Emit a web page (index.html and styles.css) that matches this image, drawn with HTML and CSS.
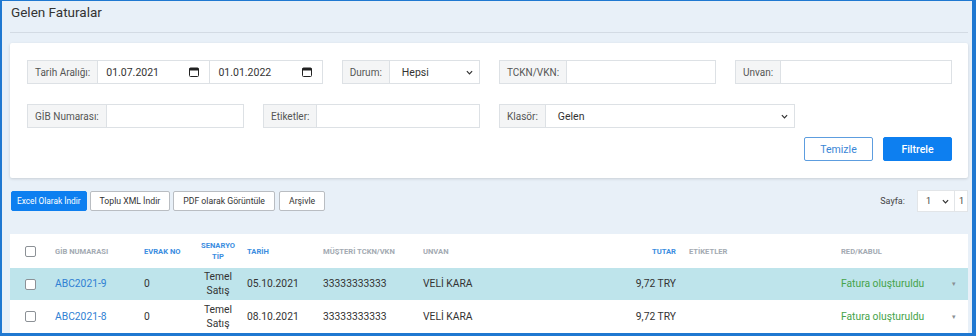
FILE: index.html
```html
<!DOCTYPE html>
<html lang="tr">
<head>
    <meta charset="UTF-8">
    <title>Gelen Faturalar</title>
    <link rel="stylesheet" href="styles.css">
</head>
<body>
<div class="frame">
    <h1 class="page-title">Gelen Faturalar</h1>

    <!-- Filtre kartı -->
    <div class="filter-card">
        <div class="filter-grid">
            <div class="group span-4">
                <span class="group-label">Tarih Aralığı:</span>
                <div class="field date">
                    <span>01.07.2021</span>
                    <svg class="cal" viewBox="0 0 10 10" width="10" height="10"><rect x="0.5" y="1" width="9" height="8.5" rx="1" fill="none" stroke="#222" stroke-width="1"/><rect x="0.5" y="1" width="9" height="2.5" fill="#222"/></svg>
                </div>
                <div class="field date">
                    <span>01.01.2022</span>
                    <svg class="cal" viewBox="0 0 10 10" width="10" height="10"><rect x="0.5" y="1" width="9" height="8.5" rx="1" fill="none" stroke="#222" stroke-width="1"/><rect x="0.5" y="1" width="9" height="2.5" fill="#222"/></svg>
                </div>
            </div>
            <div class="group span-2">
                <span class="group-label">Durum:</span>
                <div class="field select">
                    <span>Hepsi</span>
                    <svg class="chev" viewBox="0 0 8 5" width="7" height="5"><path d="M1 1l3 3 3-3" fill="none" stroke="#333" stroke-width="1.4"/></svg>
                </div>
            </div>
            <div class="group span-3">
                <span class="group-label">TCKN/VKN:</span>
                <div class="field"></div>
            </div>
            <div class="group span-3">
                <span class="group-label">Unvan:</span>
                <div class="field"></div>
            </div>

            <div class="group span-3">
                <span class="group-label">GİB Numarası:</span>
                <div class="field"></div>
            </div>
            <div class="group span-3">
                <span class="group-label">Etiketler:</span>
                <div class="field"></div>
            </div>
            <div class="group span-4">
                <span class="group-label">Klasör:</span>
                <div class="field select">
                    <span>Gelen</span>
                    <svg class="chev" viewBox="0 0 8 5" width="7" height="5"><path d="M1 1l3 3 3-3" fill="none" stroke="#333" stroke-width="1.4"/></svg>
                </div>
            </div>
        </div>
        <div class="filter-actions">
            <button class="btn btn-outline">Temizle</button>
            <button class="btn btn-primary">Filtrele</button>
        </div>
    </div>

    <!-- Araç çubuğu -->
    <div class="toolbar">
        <div class="toolbar-buttons">
            <button class="tbtn tbtn-blue">Excel Olarak İndir</button>
            <button class="tbtn">Toplu XML İndir</button>
            <button class="tbtn">PDF olarak Görüntüle</button>
            <button class="tbtn">Arşivle</button>
        </div>
        <div class="pager">
            <span class="pager-label">Sayfa:</span>
            <div class="pager-box">
                <div class="pager-select">
                    <span>1</span>
                    <svg viewBox="0 0 8 5" width="7" height="5"><path d="M1 1l3 3 3-3" fill="none" stroke="#333" stroke-width="1.4"/></svg>
                </div>
                <span class="pager-total">1</span>
            </div>
        </div>
    </div>

    <!-- Fatura tablosu -->
    <table class="invoices">
        <colgroup>
            <col style="width:40px">
            <col style="width:89px">
            <col style="width:55px">
            <col style="width:48px">
            <col style="width:76px">
            <col style="width:100px">
            <col style="width:182px">
            <col style="width:84px">
            <col style="width:152px">
            <col style="width:104px">
            <col style="width:28px">
        </colgroup>
        <thead>
            <tr>
                <th class="c-check"><span class="checkbox"></span></th>
                <th>GİB Numarası</th>
                <th class="sort">Evrak No</th>
                <th class="sort c-center">Senaryo<br>Tip</th>
                <th class="sort">Tarih</th>
                <th>Müşteri TCKN/VKN</th>
                <th>Unvan</th>
                <th class="sort c-right">Tutar</th>
                <th>Etiketler</th>
                <th>Red/Kabul</th>
                <th></th>
            </tr>
        </thead>
        <tbody>
            <tr class="selected">
                <td class="c-check"><span class="checkbox"></span></td>
                <td><a class="link">ABC2021-9</a></td>
                <td>0</td>
                <td class="c-center">Temel<br>Satış</td>
                <td>05.10.2021</td>
                <td>33333333333</td>
                <td>VELİ KARA</td>
                <td class="c-right">9,72 TRY</td>
                <td></td>
                <td class="status">Fatura oluşturuldu</td>
                <td class="caret">▾</td>
            </tr>
            <tr>
                <td class="c-check"><span class="checkbox"></span></td>
                <td><a class="link">ABC2021-8</a></td>
                <td>0</td>
                <td class="c-center">Temel<br>Satış</td>
                <td>08.10.2021</td>
                <td>33333333333</td>
                <td>VELİ KARA</td>
                <td class="c-right">9,72 TRY</td>
                <td></td>
                <td class="status">Fatura oluşturuldu</td>
                <td class="caret">▾</td>
            </tr>
        </tbody>
    </table>
</div>
</body>
</html>
```

FILE: styles.css
```css
body {
    margin: 0;
    font-family: Roboto, "Noto Sans", sans-serif;
    color: #333;
}

.frame {
    box-sizing: border-box;
    width: 976px;
    height: 336px;
    overflow: hidden;
    background: #e8f0f8;
    border-style: solid;
    border-color: #1f78d1;
    border-width: 1px 4px 3px 2px;
    padding: 0 4px 0 8px;
}

.page-title {
    margin: 0;
    font-size: 13.5px;
    font-weight: 400;
    line-height: 16px;
    color: #333;
    padding: 3px 1px 12px;
    border-bottom: 1px solid #d3dbe4;
}

/* Filtre kartı */
.filter-card {
    margin-top: 10px;
    background: #fff;
    border-radius: 2px;
    box-shadow: 0 1px 3px rgba(0, 0, 0, 0.14);
    padding: 17px 16px 17px 17px;
}

.filter-grid {
    display: grid;
    grid-template-columns: repeat(12, 1fr);
    column-gap: 19px;
    row-gap: 20px;
}

.span-2 { grid-column: span 2; }
.span-3 { grid-column: span 3; }
.span-4 { grid-column: span 4; }

.group {
    display: flex;
    height: 24px;
    box-sizing: border-box;
    border: 1px solid #dde1e5;
    font-size: 10px;
}

.group-label {
    display: flex;
    align-items: center;
    padding: 0 7px;
    background: #f4f5f6;
    border-right: 1px solid #dde1e5;
    color: #555;
    white-space: nowrap;
}

.field {
    flex: 1;
    display: flex;
    align-items: center;
    justify-content: space-between;
    color: #333;
    font-size: 10.5px;
}

.field.date {
    padding: 0 10px 0 8px;
}

.field.date + .field.date {
    border-left: 1px solid #dde1e5;
}

.field.select {
    padding: 0 6px 0 12px;
}

.filter-actions {
    display: flex;
    justify-content: flex-end;
    gap: 10px;
    margin-top: 9px;
}

.btn {
    width: 69px;
    height: 24px;
    border-radius: 2px;
    font-family: inherit;
    font-size: 10.5px;
    cursor: pointer;
}

.btn-outline {
    background: #fff;
    border: 1px solid #5d9ddf;
    color: #3a86d6;
}

.btn-primary {
    background: #0d7ff0;
    border: 1px solid #0d7ff0;
    color: #fff;
    font-weight: 500;
}

/* Araç çubuğu */
.toolbar {
    display: flex;
    justify-content: space-between;
    align-items: center;
    margin-top: 11px;
    height: 24px;
}

.toolbar-buttons {
    display: flex;
    gap: 3px;
    padding-left: 1px;
}

.tbtn {
    height: 20px;
    padding: 0 9px;
    background: #fff;
    border: 1px solid #b9bdc2;
    border-radius: 2px;
    font-family: inherit;
    font-size: 8.7px;
    color: #333;
}

.tbtn:last-child {
    margin-left: 1px;
}

.tbtn-blue {
    background: #0d7ff0;
    border-color: #0d7ff0;
    color: #fff;
    padding: 0 5px;
    font-size: 8.3px;
}

.pager {
    display: flex;
    align-items: center;
    gap: 12px;
    font-size: 9px;
    color: #444;
}

.pager-box {
    display: flex;
    height: 22px;
    background: #fff;
    border: 1px solid #e2e5e8;
    box-sizing: border-box;
}

.pager-select {
    width: 37px;
    box-sizing: border-box;
    display: flex;
    align-items: center;
    justify-content: space-between;
    padding: 0 5px 0 8px;
    border-right: 1px solid #e2e5e8;
}

.pager-total {
    display: flex;
    align-items: center;
    padding: 0 3px 0 4px;
}

/* Fatura tablosu */
.invoices {
    margin-top: 21px;
    width: 958px;
    table-layout: fixed;
    border-collapse: collapse;
    background: #fff;
}

.invoices th,
.invoices td {
    padding: 0 5px;
    text-align: left;
    white-space: nowrap;
}

.invoices th {
    height: 34px;
    font-size: 7.6px;
    font-weight: 700;
    text-transform: uppercase;
    color: #a3aab2;
    line-height: 11px;
}

.invoices th.sort {
    color: #3b8de0;
}

.invoices td {
    height: 32px;
    font-size: 10.3px;
    line-height: 14px;
    color: #333;
}

.invoices tbody tr + tr td {
    height: 33px;
}

.invoices tr.selected td {
    background: #bee4eb;
}

.invoices .c-center {
    text-align: center;
    padding: 0;
}

.invoices .c-right {
    text-align: right;
    padding-right: 8px;
}

.invoices .c-check {
    text-align: center;
    padding: 0;
}

.checkbox {
    display: inline-block;
    vertical-align: middle;
    width: 11px;
    height: 11px;
    box-sizing: border-box;
    border: 1px solid #8c9196;
    border-radius: 2px;
    background: #fff;
}

.link {
    color: #2f7fd3;
}

.invoices .status {
    color: #45a349;
}

.invoices .caret {
    text-align: center;
    color: #8a8f94;
    font-size: 7px;
}
```
